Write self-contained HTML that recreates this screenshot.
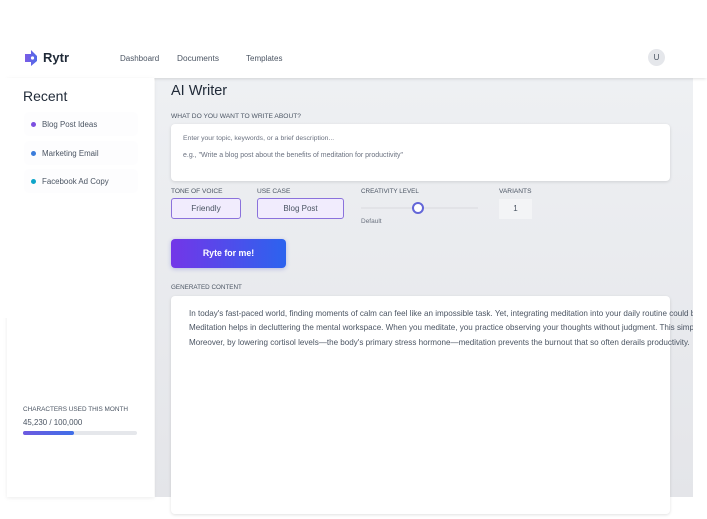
<!DOCTYPE html>
<html><head><meta charset="utf-8"><style>
html,body{margin:0;padding:0}
body{width:707px;height:519px;overflow:hidden;background:#fff;position:relative;font-family:"Liberation Sans",sans-serif;color:#374151}
.a{position:absolute;white-space:nowrap}
.lab{font-size:6.6px;color:#4b5563;line-height:9px}
.nav{font-size:8px;color:#4b5563;top:54px;line-height:10px}
.rec{left:24px;width:114px;height:24px;background:#fdfdfe;border-radius:5px}
.rec i{position:absolute;left:7px;top:9.5px;width:5px;height:5px;border-radius:50%}
.rec span{position:absolute;left:18px;top:7px;font-size:7.9px;line-height:11px;color:#4b5563}
.sel{box-sizing:border-box;height:21px;top:198px;background:#f1ecfd;border:1px solid #8b72dc;border-radius:3px;text-align:center;font-size:8px;line-height:19px;color:#4b5563}
.t{font-size:8.08px;line-height:11px;color:#4b5563}
</style></head><body>
<div class="a" style="left:155px;top:78px;width:538px;height:419px;background:linear-gradient(180deg,#eef0f3,#e4e5e9)"></div>
<div class="a" style="left:0;top:40px;width:707px;height:38px;background:#fff;box-shadow:0 2px 3px -1px rgba(0,0,0,.12)"></div>
<svg class="a" style="left:24px;top:49px" width="14" height="18" viewBox="0 0 14 18"><defs><linearGradient id="g" x1="0" x2="1" y1="0" y2="0"><stop offset="0" stop-color="#7c5ce6"/><stop offset="1" stop-color="#4f6be8"/></linearGradient></defs><path d="M1 5H7V1L13 7V12L7 17V13H1Z" fill="url(#g)"/><circle cx="8.5" cy="9" r="1.6" fill="#fff"/></svg>
<div class="a" style="left:43px;top:49px;font-size:13px;line-height:17px;font-weight:700;color:#1f2937">Rytr</div>
<div class="a nav" style="left:120px">Dashboard</div>
<div class="a nav" style="left:177px;top:53px;font-size:8.3px">Documents</div>
<div class="a nav" style="left:246px">Templates</div>
<div class="a" style="left:648px;top:49px;width:17px;height:17px;border-radius:50%;background:#e5e7eb;text-align:center;font-size:8px;line-height:17px;color:#4b5563">U</div>

<div class="a" style="left:7px;top:78px;width:147px;height:419px;background:#fff;box-shadow:0 1px 4px rgba(0,0,0,.08)"></div>
<div class="a" style="left:0;top:78px;width:154px;height:240px;background:#fff"></div>
<div class="a" style="left:23px;top:88px;font-size:14px;line-height:17px;color:#1f2937">Recent</div>
<div class="a rec" style="top:112px"><i style="background:#7c4fe0"></i><span>Blog Post Ideas</span></div>
<div class="a rec" style="top:141px"><i style="background:#3b7ddb"></i><span>Marketing Email</span></div>
<div class="a rec" style="top:169px"><i style="background:#0ea5c9"></i><span>Facebook Ad Copy</span></div>
<div class="a lab" style="left:23px;top:405px;font-size:6.4px">CHARACTERS USED THIS MONTH</div>
<div class="a" style="left:23px;top:417px;font-size:7.9px;line-height:11px;color:#4b5563">45,230 / 100,000</div>
<div class="a" style="left:23px;top:431px;width:114px;height:4px;border-radius:2px;background:#e5e7eb"><div style="width:51px;height:4px;border-radius:2px;background:linear-gradient(90deg,#6d5ae0,#3f6fe8)"></div></div>

<div class="a" style="left:171px;top:83px;font-size:14.5px;line-height:17px;color:#1f2937">AI Writer</div>
<div class="a lab" style="left:171px;top:112px;font-size:6.65px">WHAT DO YOU WANT TO WRITE ABOUT?</div>
<div class="a" style="left:171px;top:124px;width:499px;height:57px;background:#fff;border-radius:4px;box-shadow:0 1px 3px rgba(0,0,0,.12)"></div>
<div class="a" style="left:183px;top:134px;font-size:6.8px;line-height:10px;color:#6b7280">Enter your topic, keywords, or a brief description...</div>
<div class="a" style="left:183px;top:151px;font-size:7px;line-height:10px;color:#6b7280">e.g., "Write a blog post about the benefits of meditation for productivity"</div>

<div class="a lab" style="left:171px;top:187px">TONE OF VOICE</div>
<div class="a lab" style="left:257px;top:187px">USE CASE</div>
<div class="a lab" style="left:361px;top:187px;font-size:6.3px">CREATIVITY LEVEL</div>
<div class="a lab" style="left:499px;top:187px">VARIANTS</div>
<div class="a sel" style="left:171px;width:70px;font-size:8.3px">Friendly</div>
<div class="a sel" style="left:257px;width:87px">Blog Post</div>
<div class="a" style="left:361px;top:207px;width:117px;height:2px;background:#e2e3e7"></div>
<div class="a" style="box-sizing:border-box;left:412px;top:202px;width:12px;height:12px;border-radius:50%;background:#fff;border:2px solid #6366d8"></div>
<div class="a" style="left:361px;top:217px;font-size:6.5px;line-height:9px;color:#6b7280">Default</div>
<div class="a" style="left:499px;top:199px;width:33px;height:20px;background:#f3f4f6;text-align:center;font-size:8px;line-height:20px;color:#4b5563">1</div>
<div class="a" style="left:171px;top:239px;width:115px;height:29px;border-radius:4px;background:linear-gradient(90deg,#7336e8,#2c63ee);box-shadow:0 1px 4px rgba(60,70,200,.3);color:#fff;font-size:8.8px;font-weight:700;line-height:28px;text-align:center">Ryte for me!</div>
<div class="a lab" style="left:171px;top:283px;font-size:6.3px">GENERATED CONTENT</div>

<div class="a" style="left:171px;top:296px;width:499px;height:218px;background:#fff;border-radius:4px;box-shadow:0 1px 3px rgba(0,0,0,.12)"></div>
<div style="position:absolute;left:171px;top:296px;width:522px;height:60px;overflow:hidden">
<div class="a t" style="left:18px;top:12px">In today's fast-paced world, finding moments of calm can feel like an impossible task. Yet, integrating meditation into your daily routine could be the key to unlocking</div>
<div class="a t" style="left:18px;top:26px">Meditation helps in decluttering the mental workspace. When you meditate, you practice observing your thoughts without judgment. This simple act can transform</div>
<div class="a t" style="left:18px;top:41px">Moreover, by lowering cortisol levels—the body's primary stress hormone—meditation prevents the burnout that so often derails productivity.</div>
</div>
</body></html>
